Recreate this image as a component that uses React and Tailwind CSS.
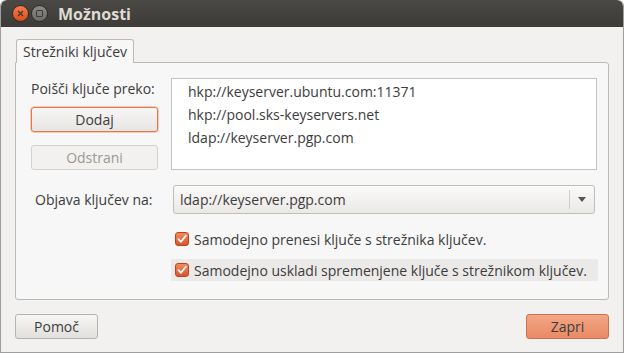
import React from "react";

const Check = () => (
  <span className="w-[14px] h-[14px] rounded-[3px] bg-gradient-to-b from-[#f28a5c] to-[#d9532a] border border-[#b8451f] flex items-center justify-center shrink-0">
    <svg width="10" height="10" viewBox="0 0 10 10">
      <path d="M1.5 5.2 L4 7.8 L8.8 1.8" fill="none" stroke="#fff" strokeWidth="1.8" strokeLinecap="round" strokeLinejoin="round" />
    </svg>
  </span>
);

export default function App() {
  const servers = [
    "hkp://keyserver.ubuntu.com:11371",
    "hkp://pool.sks-keyservers.net",
    "ldap://keyserver.pgp.com",
  ];

  return (
    <div className="w-[624px] h-[353px] bg-[#f2f1f0] text-[14px] text-[#3c3c3c] overflow-hidden flex flex-col border-x border-b border-[#a09f9b] rounded-t-[6px]" style={{ fontFamily: "'Open Sans', 'Noto Sans', sans-serif" }}>
      {/* title bar */}
      <div className="h-[27px] shrink-0 bg-gradient-to-b from-[#4a4945] to-[#3c3b37] rounded-t-[6px] flex items-center pl-[11px] gap-[2px]">
        <span className="w-[17px] h-[17px] rounded-full bg-gradient-to-b from-[#f57c4c] to-[#df4a16] border border-[#2d2c28] flex items-center justify-center">
          <svg width="7" height="7" viewBox="0 0 7 7"><path d="M1 1 L6 6 M6 1 L1 6" stroke="#3c3b37" strokeWidth="1.4" /></svg>
        </span>
        <span className="w-[17px] h-[17px] rounded-full bg-gradient-to-b from-[#8b8a86] to-[#6e6d69] border border-[#2d2c28] flex items-center justify-center">
          <span className="w-[7px] h-[7px] border border-[#3c3b37] rounded-[1px]" />
        </span>
        <span className="ml-[8px] font-bold text-[16px] text-[#dfdbd2]">Možnosti</span>
      </div>

      <div className="flex-1 flex flex-col px-[14px] pt-[12px] pb-[13px]">
        {/* tab */}
        <div className="flex">
          <div className="ml-[1px] px-[6px] h-[24px] flex items-center bg-[#f7f7f7] border border-b-0 border-[#bcbab5] rounded-t-[3px] -mb-px relative z-10">
            Strežniki ključev
          </div>
        </div>
        {/* page */}
        <div className="h-[238px] bg-[#f7f7f7] border border-[#bcbab5] rounded-b-[3px] rounded-tr-[3px] flex flex-col pl-[15px] pr-[11px] pt-[15px]">
          <div className="flex gap-[13px]">
            <div className="w-[127px] flex flex-col">
              <div className="h-[20px] flex items-center whitespace-nowrap">Poišči ključe preko:</div>
              <button className="mt-[9px] h-[25px] rounded-[3px] border border-[#e5774b] bg-gradient-to-b from-[#f7f6f5] to-[#e8e6e3] shadow-[0_0_0_0.5px_#f0a080]">Dodaj</button>
              <button className="mt-[13px] h-[25px] rounded-[3px] border border-[#d4d2ce] bg-[#f2f1f0] text-[#9b9893]">Odstrani</button>
            </div>
            <div className="flex-1 h-[92px] bg-white border border-[#c5c3bf] pl-[16px] pt-[1px]">
              {servers.map((s) => (
                <div key={s} className="h-[23px] flex items-center">{s}</div>
              ))}
            </div>
          </div>

          <div className="flex items-center mt-[15px]">
            <div className="w-[142px] pl-[4px]">Objava ključev na:</div>
            <div className="w-[422px] h-[29px] rounded-[3px] border border-[#c0beb9] bg-gradient-to-b from-[#fafaf9] to-[#ebe9e6] flex items-center">
              <span className="flex-1 pl-[6px]">ldap://keyserver.pgp.com</span>
              <span className="w-px h-[19px] bg-[#cfcdc9]" />
              <span className="w-[24px] flex justify-center">
                <svg width="8" height="5" viewBox="0 0 8 5"><path d="M0 0 L8 0 L4 5 Z" fill="#555" /></svg>
              </span>
            </div>
          </div>

          <div className="ml-[140px] mt-[14px] flex flex-col">
            <div className="h-[22px] flex items-center gap-[5px] pl-[4px]">
              <Check />
              <span>Samodejno prenesi ključe s strežnika ključev.</span>
            </div>
            <div className="mt-[9px] h-[22px] flex items-center gap-[5px] pl-[4px] bg-[#ebeae8] w-[427px]">
              <Check />
              <span className="whitespace-nowrap">Samodejno uskladi spremenjene ključe s strežnikom ključev.</span>
            </div>
          </div>
        </div>

        {/* buttons */}
        <div className="mt-auto flex justify-between">
          <button className="w-[83px] h-[25px] rounded-[3px] border border-[#b5b3ae] bg-gradient-to-b from-[#f7f6f5] to-[#e2e0dc]">Pomoč</button>
          <button className="w-[83px] h-[25px] rounded-[3px] border border-[#c9744f] bg-gradient-to-b from-[#f3a687] to-[#e88a64]">Zapri</button>
        </div>
      </div>
    </div>
  );
}
